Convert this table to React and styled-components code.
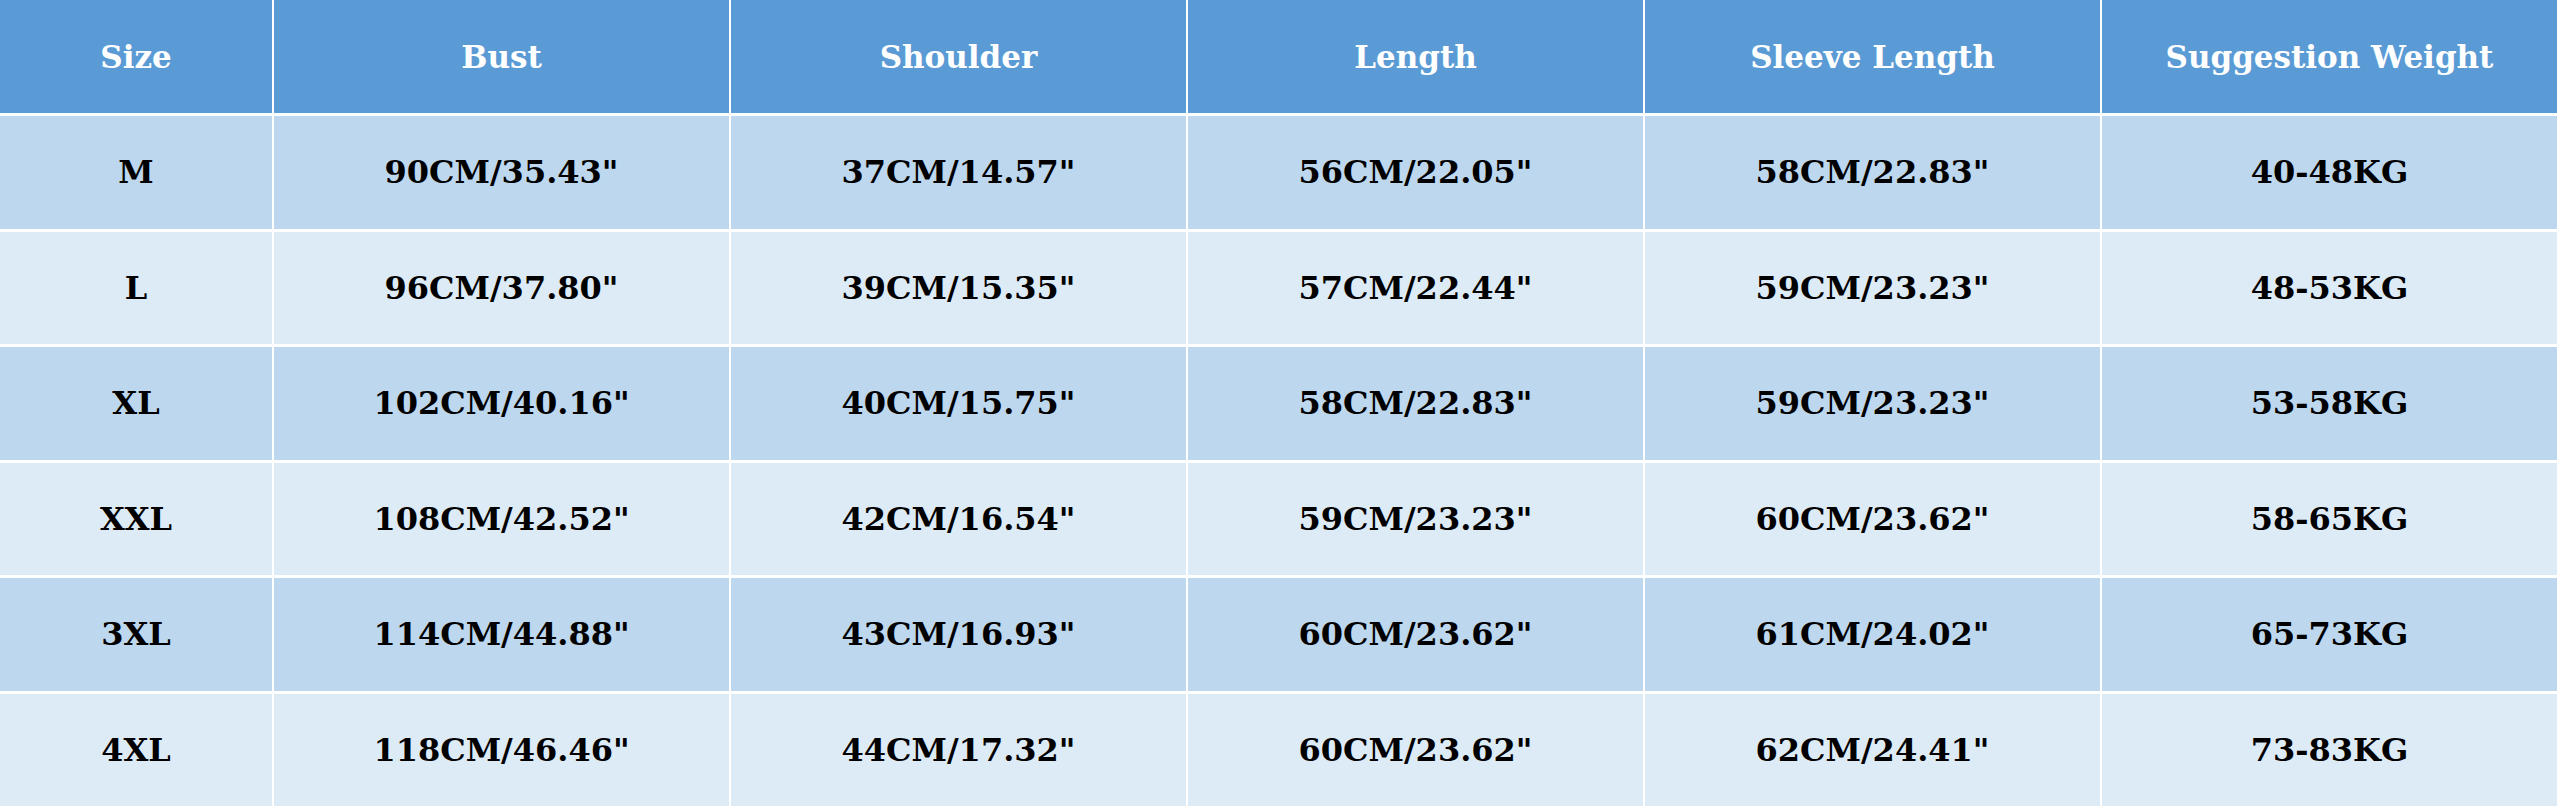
import React from "react";
import styled, { createGlobalStyle } from "styled-components";

const Global = createGlobalStyle`
  html, body {
    margin: 0;
    padding: 0;
    background: #ffffff;
  }
`;

const columns = ["Size", "Bust", "Shoulder", "Length", "Sleeve Length", "Suggestion Weight"];

const rows = [
  ["M", "90CM/35.43\"", "37CM/14.57\"", "56CM/22.05\"", "58CM/22.83\"", "40-48KG"],
  ["L", "96CM/37.80\"", "39CM/15.35\"", "57CM/22.44\"", "59CM/23.23\"", "48-53KG"],
  ["XL", "102CM/40.16\"", "40CM/15.75\"", "58CM/22.83\"", "59CM/23.23\"", "53-58KG"],
  ["XXL", "108CM/42.52\"", "42CM/16.54\"", "59CM/23.23\"", "60CM/23.62\"", "58-65KG"],
  ["3XL", "114CM/44.88\"", "43CM/16.93\"", "60CM/23.62\"", "61CM/24.02\"", "65-73KG"],
  ["4XL", "118CM/46.46\"", "44CM/17.32\"", "60CM/23.62\"", "62CM/24.41\"", "73-83KG"],
];

const Table = styled.div`
  width: 2557px;
  display: grid;
  grid-template-columns: 272px repeat(5, 1fr);
  grid-template-rows: 113px repeat(6, 112.5px);
  column-gap: 2px;
  row-gap: 3px;
  background: #ffffff;
  font-family: Georgia, "DejaVu Serif", serif;
  font-weight: bold;
`;

const HeadCell = styled.div`
  display: flex;
  align-items: center;
  justify-content: center;
  background: #5b9bd5;
  color: #ffffff;
  font-size: 31px;
`;

const Cell = styled.div`
  display: flex;
  align-items: center;
  justify-content: center;
  background: ${(p) => (p.$odd ? "#bdd7ee" : "#ddebf7")};
  color: #000000;
  font-size: 32px;
`;

export default function App() {
  return (
    <>
      <Global />
      <Table>
        {columns.map((c) => (
          <HeadCell key={c}>{c}</HeadCell>
        ))}
        {rows.map((r, i) =>
          r.map((v, j) => (
            <Cell key={`${i}-${j}`} $odd={i % 2 === 0}>
              {v}
            </Cell>
          ))
        )}
      </Table>
    </>
  );
}
